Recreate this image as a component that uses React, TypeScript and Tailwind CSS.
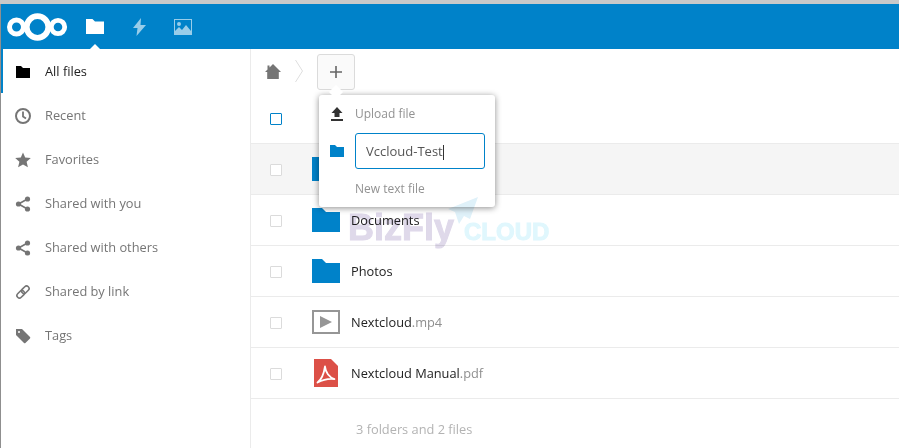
/**
 * Nextcloud files view with the "new" menu open
 */

import { useState } from 'react'

const BLUE = '#0082c9'

function FolderIcon({ className }: { className?: string }) {
  return (
    <svg viewBox="0 0 28 24" className={className} fill="currentColor" preserveAspectRatio="none">
      <path d="M0 0h10l4 4h14v20H0z" />
    </svg>
  )
}

function HomeIcon() {
  return (
    <svg viewBox="0 0 16 15" className="w-4 h-[15px]" fill="#757575">
      <path d="M8 0 16 8h-2.2v7H2.2V8H0l2.5-2.5V1.500h2v2z" />
    </svg>
  )
}

function Logo() {
  return (
    <svg viewBox="0 0 62 30" className="w-[62px] h-[30px]" fill="none" stroke="#fff">
      <circle cx="10.500" cy="15" r="7" strokeWidth="5" />
      <circle cx="31.500" cy="15" r="10.800" strokeWidth="5.800" />
      <circle cx="52" cy="15" r="6.700" strokeWidth="4.800" />
    </svg>
  )
}

function ActivityIcon() {
  return (
    <svg viewBox="0 0 13 18" className="w-[13px] h-[18px]" fill="#fff" fillOpacity="0.6">
      <path d="M8 0 0 10h4.500L3.500 18 13 7H7.500z" />
    </svg>
  )
}

function GalleryIcon() {
  return (
    <svg viewBox="0 0 18 16" className="w-[18px] h-4" fill="#fff" fillOpacity="0.6">
      <path
        fillRule="evenodd"
        d="M0 0h18v16H0zM1 1v11l4-4 3 3 4-5 5 6V1zM5 3a2 2 0 1 1 0 4 2 2 0 0 1 0-4z"
      />
    </svg>
  )
}

function ClockIcon() {
  return (
    <svg viewBox="0 0 16 16" className="w-4 h-4" fill="none" stroke="#757575">
      <circle cx="8" cy="8" r="7" strokeWidth="2" />
      <path d="M8 3.500V8.500L11 10.500" strokeWidth="1.800" />
    </svg>
  )
}

function StarIcon() {
  return (
    <svg viewBox="0 0 16 16" className="w-4 h-4" fill="#757575">
      <path d="M8 .5 10.200 5.600 15.800 6.100 11.600 9.800 12.900 15.300 8 12.400 3.100 15.300 4.400 9.800.2 6.100 5.800 5.600z" />
    </svg>
  )
}

function ShareIcon() {
  return (
    <svg viewBox="0 0 16 16" className="w-4 h-4" fill="#757575" stroke="#757575">
      <circle cx="3.500" cy="8" r="2.600" stroke="none" />
      <circle cx="12.500" cy="3" r="2.600" stroke="none" />
      <circle cx="12.500" cy="13" r="2.600" stroke="none" />
      <path d="M3.500 8 12.500 3M3.500 8l9 5" strokeWidth="1.600" />
    </svg>
  )
}

function LinkIcon() {
  return (
    <svg viewBox="0 0 16 16" className="w-4 h-4" fill="none" stroke="#757575" strokeWidth="1.600">
      <g transform="rotate(-45 8 8)">
        <rect x="0.500" y="5.500" width="8.500" height="5" rx="2.500" />
        <rect x="7" y="5.500" width="8.500" height="5" rx="2.500" />
      </g>
    </svg>
  )
}

function TagIcon() {
  return (
    <svg viewBox="0 0 16 16" className="w-4 h-4" fill="#757575">
      <path
        fillRule="evenodd"
        d="M1 1h6l8 8a1 1 0 0 1 0 1.400l-4.600 4.600a1 1 0 0 1-1.400 0l-8-8zM4 3a1 1 0 1 0 0 2 1 1 0 0 0 0-2z"
      />
    </svg>
  )
}

function UploadIcon() {
  return (
    <svg viewBox="0 0 12 14" className="w-3 h-[14px]" fill="#333">
      <path d="M6 0 11.500 6H8.500v4h-5V6H.5zM0 12h12v2H0z" />
    </svg>
  )
}

function VideoIcon() {
  return (
    <svg viewBox="0 0 28 24" className="w-7 h-6">
      <rect x="1" y="1" width="26" height="22" fill="#fff" stroke="#969696" strokeWidth="2" />
      <path d="M8 6 20 12 8 18z" fill="#969696" />
    </svg>
  )
}

function PdfIcon() {
  return (
    <svg viewBox="0 0 24 28" className="w-6 h-7">
      <path d="M0 0h17l7 7v21H0z" fill="#dc5047" />
      <path
        d="M3.500 23.500C7 21 10 14 11 7.500 11.500 13 15 18.500 20.500 20 16 19.500 9 20.500 3.500 23.500z"
        fill="none"
        stroke="#fff"
        strokeWidth="1.800"
        strokeLinejoin="round"
      />
    </svg>
  )
}

const navItems = [
  { label: 'Recent', icon: <ClockIcon /> },
  { label: 'Favorites', icon: <StarIcon /> },
  { label: 'Shared with you', icon: <ShareIcon /> },
  { label: 'Shared with others', icon: <ShareIcon /> },
  { label: 'Shared by link', icon: <LinkIcon /> },
  { label: 'Tags', icon: <TagIcon /> },
]

const files = [
  { name: 'Documents', ext: '', kind: 'folder' },
  { name: 'Photos', ext: '', kind: 'folder' },
  { name: 'Nextcloud', ext: '.mp4', kind: 'video' },
  { name: 'Nextcloud Manual', ext: '.pdf', kind: 'pdf' },
]

function Checkbox({ active }: { active?: boolean }) {
  return (
    <span
      className={
        active
          ? 'block mt-[2px] w-3 h-3 rounded-[1px] border border-[#0082c9] bg-white'
          : 'block mt-[2px] w-3 h-3 rounded-[1px] border border-[#dbdbdb] bg-white'
      }
    />
  )
}

function FileRow({ name, ext, kind }: { name: string; ext: string; kind: string }) {
  return (
    <div className="h-[51px] flex items-center border-b border-[#ebebeb]">
      <div className="w-[50px] pl-[19px] shrink-0">
        <Checkbox />
      </div>
      <div className="w-7 ml-[11px] shrink-0 flex justify-center">
        {kind === 'folder' && <FolderIcon className="w-7 h-6 text-[#0082c9]" />}
        {kind === 'video' && <VideoIcon />}
        {kind === 'pdf' && <PdfIcon />}
      </div>
      <div className="ml-[11px] mt-[2px] text-[12.8px] text-[#222]">
        {name}
        <span className="text-[#8f8f8f]">{ext}</span>
      </div>
    </div>
  )
}

export default function App() {
  const [folderName, setFolderName] = useState('Vccloud-Test')

  return (
    <div
      className="w-[899px] h-[448px] overflow-hidden bg-white flex flex-col"
      style={{ fontFamily: '"Open Sans", sans-serif' }}
    >
      <div className="h-[4px] bg-[#c9c9c9] shrink-0" />
      <div className="flex flex-1 min-h-0">
        <div className="w-px bg-[#8f8f8f] shrink-0" />
        <div className="flex-1 flex flex-col min-w-0">
          {/* header */}
          <header className="h-[45px] shrink-0 flex items-center" style={{ backgroundColor: BLUE }}>
            <div className="ml-[5px]">
              <Logo />
            </div>
            <div className="relative ml-[18px] w-[18px] flex justify-center">
              <FolderIcon className="w-[18px] h-[15px] text-white" />
              <div className="absolute left-[-1px] top-[25px] w-0 h-0 border-x-[10px] border-x-transparent border-b-[10px] border-b-white" />
            </div>
            <div className="ml-[29px] flex">
              <ActivityIcon />
            </div>
            <div className="ml-[28px] flex">
              <GalleryIcon />
            </div>
          </header>

          <div className="flex flex-1 min-h-0">
            {/* sidebar */}
            <nav className="w-[250px] shrink-0 border-r border-[#ebebeb] text-[12.8px] text-[#757575]">
              <div className="relative h-11 pt-[2px] flex items-center text-[#222]">
                <div className="absolute left-0 top-0 w-[2px] h-11 bg-[#0082c9]" />
                <FolderIcon className="w-[14px] h-3 ml-[15px] text-black" />
                <span className="ml-[15px]">All files</span>
              </div>
              {navItems.map((item) => (
                <div key={item.label} className="h-11 pt-[2px] flex items-center">
                  <div className="w-4 ml-[14px] flex">{item.icon}</div>
                  <span className="ml-[14px]">{item.label}</span>
                </div>
              ))}
            </nav>

            {/* content */}
            <main className="relative flex-1 min-w-0">
              <div className="h-11 flex items-center">
                <div className="ml-[14px]">
                  <HomeIcon />
                </div>
                <svg viewBox="0 0 8 22" className="w-2 h-[22px] ml-[14px]" fill="none" stroke="#dedede">
                  <path d="M.5 0l7 11-7 11" />
                </svg>
                <button
                  type="button"
                  className="ml-[14px] w-[38px] h-[36px] mt-[1px] rounded-[3px] border border-[#dbdbdb] bg-[#fafafa] flex items-center justify-center"
                >
                  <svg viewBox="0 0 12 12" className="w-3 h-3" stroke="#666" strokeWidth="1.600">
                    <path d="M6 0v12M0 6h12" />
                  </svg>
                </button>
              </div>

              <div className="h-[51px] flex items-center border-b border-[#ebebeb]">
                <div className="pl-[19px]">
                  <Checkbox active />
                </div>
              </div>

              <div className="h-[51px] flex items-center border-b border-[#ebebeb] bg-[#f5f5f5]">
                <div className="w-[50px] pl-[19px] shrink-0">
                  <Checkbox />
                </div>
                <div className="ml-[11px]">
                  <FolderIcon className="w-7 h-6 text-[#0082c9]" />
                </div>
              </div>

              {files.map((f) => (
                <FileRow key={f.name} name={f.name} ext={f.ext} kind={f.kind} />
              ))}

              <div className="pl-[105px] pt-[21px] text-[12.8px] text-[#b3b3b3]">3 folders and 2 files</div>

              {/* new file menu */}
              <div className="absolute left-[68px] top-[46px] w-[176px] h-[112px] rounded-[3px] bg-white shadow-[0_1px_6px_rgba(0,0,0,0.45)] text-[12px] text-[#929292]">
                <div className="absolute left-[12px] top-[-8px] w-[10px] h-[10px] rotate-45 bg-white" />
                <div className="relative h-[38px] flex items-center">
                  <div className="ml-[12px] w-3 flex">
                    <UploadIcon />
                  </div>
                  <span className="ml-[12px]">Upload file</span>
                </div>
                <div className="relative h-[36px] flex items-center">
                  <FolderIcon className="ml-[11px] w-[14px] h-3 text-[#0082c9]" />
                  <input
                    value={folderName}
                    onChange={(e) => setFolderName(e.target.value)}
                    className="ml-[11px] w-[130px] h-9 rounded-[3px] border border-[#0082c9] px-[10px] text-[13px] text-[#555] outline-none"
                  />
                  <div className="absolute left-[124px] top-[12px] w-px h-[15px] bg-[#333]" />
                </div>
                <div className="h-[38px] pt-[2px] flex items-center pl-[36px]">New text file</div>
              </div>

              {/* watermark, lies over everything */}
              <div
                className="absolute left-[97px] top-[161px] pointer-events-none flex items-baseline mix-blend-multiply"
                style={{ fontFamily: '"Liberation Sans", sans-serif' }}
              >
                <span className="text-[36px] leading-none font-bold text-[#dfd9ea] [-webkit-text-stroke:1px_#dfd9ea]">
                  BizFly
                </span>
                <span className="ml-[10px] text-[24px] leading-none font-bold text-[#e0f7fd] [-webkit-text-stroke:1px_#e0f7fd]">
                  CLOUD
                </span>
                <svg
                  viewBox="0 0 30 27"
                  className="absolute left-[100px] top-[-13px] w-[30px] h-[27px]"
                  fill="#dff1f9"
                >
                  <path d="M30 0 0 12l7 3 4 12 5-8 6 3z" />
                </svg>
              </div>
            </main>
          </div>
        </div>
      </div>
    </div>
  )
}
